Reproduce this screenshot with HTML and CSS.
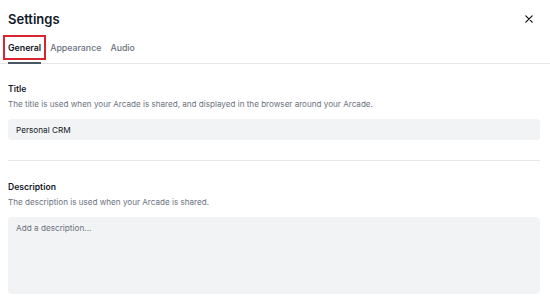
FILE: index.html
```html
<!DOCTYPE html>
<html>
<head>
    <title>Settings</title>
    <link rel="stylesheet" href="styles.css">
</head>
<body>
    <div class="modal">
        <div class="header">
            <h1>Settings</h1>
            <button class="close" aria-label="Close">
                <svg width="8" height="8" viewBox="0 0 10 10"><path d="M1 1L9 9M9 1L1 9" stroke="#111" stroke-width="1.5" stroke-linecap="round"/></svg>
            </button>
        </div>

        <div class="tabs">
            <div class="tab active">General</div>
            <div class="tab">Appearance</div>
            <div class="tab">Audio</div>
        </div>

        <div class="content">
            <div class="field">
                <label>Title</label>
                <p class="hint">The title is used when your Arcade is shared, and displayed in the browser around your Arcade.</p>
                <input type="text" value="Personal CRM">
            </div>

            <hr>

            <div class="field">
                <label>Description</label>
                <p class="hint">The description is used when your Arcade is shared.</p>
                <textarea placeholder="Add a description..."></textarea>
            </div>
        </div>
    </div>
</body>
</html>
```

FILE: styles.css
```css
body {
    margin: 0;
    font-family: Inter, "Noto Sans", sans-serif;
    color: #111827;
    background: #fff;
}
.header {
    display: flex;
    justify-content: space-between;
    align-items: center;
    padding: 10px 17px 0 8px;
}
h1 {
    margin: 0;
    font-size: 13px;
    font-weight: 600;
    line-height: 18px;
}
.close {
    background: none;
    border: none;
    padding: 0;
    display: flex;
    cursor: pointer;
}
.tabs {
    display: flex;
    gap: 9px;
    padding: 0 8px;
    margin-top: 6px;
    border-bottom: 1px solid #e5e7eb;
}
.tab {
    font-size: 8.8px;
    font-weight: 500;
    color: #6b7280;
    padding: 8px 0 9px;
    line-height: 12px;
    position: relative;
}
.tab.active {
    color: #111827;
    font-weight: 600;
}
.tab.active::before {
    content: "";
    position: absolute;
    left: -5px;
    right: -5px;
    top: 1px;
    bottom: 3px;
    border: 2px solid #d7262f;
}
.tab.active::after {
    content: "";
    position: absolute;
    left: 0;
    right: 0;
    bottom: -1px;
    height: 2px;
    background: #4b5563;
}
.content {
    padding: 19px 10px 0 8px;
}
.field label {
    display: block;
    font-size: 8.6px;
    font-weight: 600;
    line-height: 12px;
}
.hint {
    margin: 3px 0 9px;
    font-size: 8.1px;
    line-height: 12px;
    color: #6b7280;
}
input, textarea {
    display: block;
    width: 100%;
    box-sizing: border-box;
    background: #f2f3f5;
    border: none;
    border-radius: 4px;
    font-family: inherit;
    font-size: 8.2px;
    color: #111827;
    padding: 0 8px;
    outline: none;
}
input {
    height: 21px;
}
textarea {
    height: 77px;
    padding-top: 6px;
    resize: none;
}
textarea::placeholder {
    color: #6b7280;
}
hr {
    border: none;
    border-top: 1px solid #e5e7eb;
    margin: 20px 0 20px;
}
```
